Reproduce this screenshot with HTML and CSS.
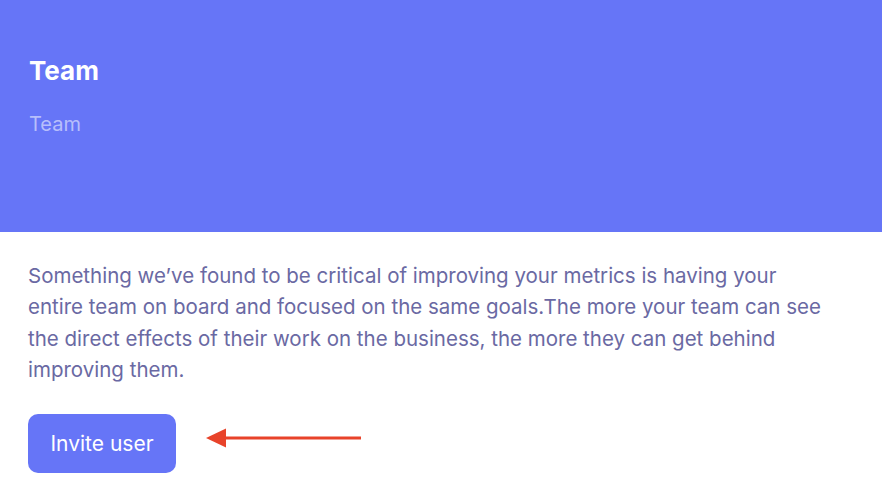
FILE: index.html
```
<!DOCTYPE html>
<html lang="en">
<head>
    <meta charset="UTF-8">
    <meta name="viewport" content="width=device-width, initial-scale=1.0">
    <title>Team</title>
    <link rel="stylesheet" href="styles.css">
</head>
<body>
    <header class="hero">
        <h1>Team</h1>
        <p class="crumb">Team</p>
    </header>
    <section class="content">
        <p class="intro">Something we’ve found to be critical of improving your metrics is having your entire team on board and focused on the same goals.The more your team can see the direct effects of their work on the business, the more they can get behind improving them.</p>
        <div class="actions">
            <button class="invite-btn" type="button">Invite user</button>
            <svg class="arrow" width="156" height="22" viewBox="0 0 156 22">
                <polygon points="0,11 20,1.5 20,20.5" fill="#e8432a"/>
                <rect x="18" y="9.5" width="137" height="3" fill="#e8432a"/>
            </svg>
        </div>
    </section>
</body>
</html>
```

FILE: styles.css
```
body {
    margin: 0;
    font-family: Inter, "Noto Sans", sans-serif;
    background-color: #fff;
}
.hero {
    background-color: #6675f7;
    height: 232px;
    padding: 55px 29px 0;
    box-sizing: border-box;
}
.hero h1 {
    margin: 0;
    color: #fff;
    font-size: 26px;
    font-weight: 700;
    line-height: 32px;
}
.hero .crumb {
    margin: 24px 0 0;
    color: rgba(255, 255, 255, 0.55);
    font-size: 20px;
    line-height: 26px;
}
.content {
    padding: 28px 28px 0;
}
.intro {
    margin: 0;
    color: #6a69a3;
    font-size: 20.5px;
    line-height: 31.3px;
    max-width: 805px;
}
.actions {
    display: flex;
    align-items: center;
    gap: 30px;
    margin-top: 29px;
}
.invite-btn {
    background-color: #6675f7;
    color: #fff;
    border: none;
    border-radius: 10px;
    width: 148px;
    height: 59px;
    font-family: inherit;
    font-size: 21px;
    cursor: pointer;
}
.arrow {
    display: block;
    margin-top: -12px;
}
```
